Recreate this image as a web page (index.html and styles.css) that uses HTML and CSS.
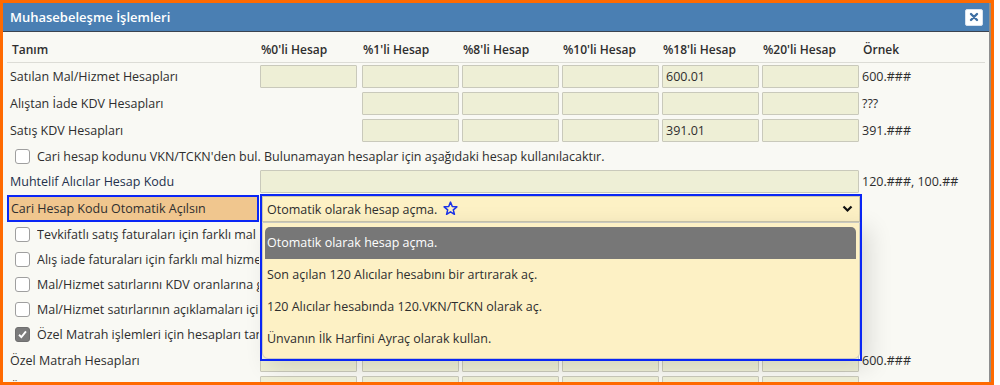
FILE: index.html
```html
<!DOCTYPE html>
<html lang="tr">
<head>
    <meta charset="UTF-8">
    <meta name="viewport" content="width=device-width, initial-scale=1.0">
    <title>Muhasebeleşme İşlemleri</title>
    <link rel="stylesheet" href="styles.css">
</head>
<body>

    <div class="dialog">
        <div class="window">
            <div class="titlebar">
                <span class="title">Muhasebeleşme İşlemleri</span>
                <button class="close" aria-label="Kapat">
                    <svg width="10" height="10" viewBox="0 0 10 10"><path d="M2 2 L8 8 M8 2 L2 8" stroke="#3f6fa3" stroke-width="2.4" stroke-linecap="round"/></svg>
                </button>
            </div>

            <div class="content">
                <div class="row head">
                    <div class="label">Tanım</div>
                    <div>%0'li Hesap</div>
                    <div>%1'li Hesap</div>
                    <div>%8'li Hesap</div>
                    <div>%10'li Hesap</div>
                    <div>%18'li Hesap</div>
                    <div>%20'li Hesap</div>
                    <div>Örnek</div>
                </div>

                <div class="row">
                    <div class="label">Satılan Mal/Hizmet Hesapları</div>
                    <div><input class="field" type="text"></div>
                    <div><input class="field" type="text"></div>
                    <div><input class="field" type="text"></div>
                    <div><input class="field" type="text"></div>
                    <div><input class="field" type="text" value="600.01"></div>
                    <div><input class="field" type="text"></div>
                    <div class="sample">600.###</div>
                </div>

                <div class="row">
                    <div class="label">Alıştan İade KDV Hesapları</div>
                    <div></div>
                    <div><input class="field" type="text"></div>
                    <div><input class="field" type="text"></div>
                    <div><input class="field" type="text"></div>
                    <div><input class="field" type="text"></div>
                    <div><input class="field" type="text"></div>
                    <div class="sample">???</div>
                </div>

                <div class="row">
                    <div class="label">Satış KDV Hesapları</div>
                    <div></div>
                    <div><input class="field" type="text"></div>
                    <div><input class="field" type="text"></div>
                    <div><input class="field" type="text"></div>
                    <div><input class="field" type="text" value="391.01"></div>
                    <div><input class="field" type="text"></div>
                    <div class="sample">391.###</div>
                </div>

                <label class="check">
                    <input type="checkbox">
                    <span>Cari hesap kodunu VKN/TCKN'den bul. Bulunamayan hesaplar için aşağıdaki hesap kullanılacaktır.</span>
                </label>

                <div class="row">
                    <div class="label navy">Muhtelif Alıcılar Hesap Kodu</div>
                    <div class="wide"><input class="field" type="text"></div>
                    <div class="sample">120.###, 100.##</div>
                </div>

                <div class="row">
                    <div class="label marked">Cari Hesap Kodu Otomatik Açılsın</div>
                    <div class="wide combo">
                        <div class="combo-value">
                            <span>Otomatik olarak hesap açma.</span>
                            <svg class="star" width="15" height="15" viewBox="0 0 16 16"><path d="M8 1.2 L9.9 5.8 L14.8 6.2 L11 9.4 L12.2 14.2 L8 11.6 L3.8 14.2 L5 9.4 L1.2 6.2 L6.1 5.8 Z" fill="none" stroke="#1b33e8" stroke-width="1.6" stroke-linejoin="round"/></svg>
                            <svg class="chevron" width="11" height="8" viewBox="0 0 11 8"><path d="M1.5 1.5 L5.5 5.5 L9.5 1.5" fill="none" stroke="#111" stroke-width="2.2"/></svg>
                        </div>
                        <div class="combo-list">
                            <ul class="options">
                                <li class="active">Otomatik olarak hesap açma.</li>
                                <li>Son açılan 120 Alıcılar hesabını bir artırarak aç.</li>
                                <li>120 Alıcılar hesabında 120.VKN/TCKN olarak aç.</li>
                                <li>Ünvanın İlk Harfini Ayraç olarak kullan.</li>
                            </ul>
                        </div>
                    </div>
                </div>

                <label class="check list-check">
                    <input type="checkbox">
                    <span>Tevkifatlı satış faturaları için farklı mal hizmet hesabı kullan.</span>
                </label>
                <label class="check list-check">
                    <input type="checkbox">
                    <span>Alış iade faturaları için farklı mal hizmet hesabı kullan.</span>
                </label>
                <label class="check list-check">
                    <input type="checkbox">
                    <span>Mal/Hizmet satırlarını KDV oranlarına göre grupla.</span>
                </label>
                <label class="check list-check">
                    <input type="checkbox">
                    <span>Mal/Hizmet satırlarının açıklamaları için ayrı satır oluştur.</span>
                </label>
                <label class="check list-check">
                    <input type="checkbox" checked>
                    <span>Özel Matrah işlemleri için hesapları tanımla.</span>
                </label>

                <div class="row">
                    <div class="label">Özel Matrah Hesapları</div>
                    <div><input class="field" type="text"></div>
                    <div><input class="field" type="text"></div>
                    <div><input class="field" type="text"></div>
                    <div><input class="field" type="text"></div>
                    <div><input class="field" type="text"></div>
                    <div><input class="field" type="text"></div>
                    <div class="sample">600.###</div>
                </div>

                <div class="row">
                    <div class="label">Özel Matrah KDV Hesapları</div>
                    <div><input class="field" type="text"></div>
                    <div><input class="field" type="text"></div>
                    <div><input class="field" type="text"></div>
                    <div><input class="field" type="text"></div>
                    <div><input class="field" type="text"></div>
                    <div><input class="field" type="text"></div>
                    <div class="sample">391.###</div>
                </div>
            </div>
        </div>
    </div>

</body>
</html>
```

FILE: styles.css
```css
* {
    margin: 0;
    padding: 0;
    box-sizing: border-box;
}

body {
    font-family: 'Open Sans', 'Noto Sans', sans-serif;
    font-size: 12.5px;
    color: #2e2e2e;
    background: #ffffff;
}

.dialog {
    width: 994px;
    height: 385px;
    border: 3px solid #ff6a00;
    overflow: hidden;
    background-color: #f9f9f4;
}

.window {
    height: 100%;
    border-right: 2px solid #8e8e8e;
}

.titlebar {
    height: 29px;
    display: flex;
    align-items: center;
    justify-content: space-between;
    padding: 0 6px 0 7px;
    background-color: #4a7fb3;
    border-bottom: 1px solid #3b4450;
}

.title {
    color: #ffffff;
    font-weight: 600;
    font-size: 13px;
}

.close {
    width: 18px;
    height: 17px;
    display: flex;
    align-items: center;
    justify-content: center;
    background-color: #ffffff;
    border: 1px solid #d8e2ee;
    border-radius: 2px;
}

.content {
    padding-left: 4px;
}

.row {
    display: grid;
    grid-template-columns: 253px 102px repeat(5, 100px) 1fr;
    align-items: center;
    height: 27px;
}

.row.head {
    height: 31px;
    padding-top: 5px;
    font-weight: 600;
    font-size: 12px;
    border-bottom: 1px solid #dcdcd6;
    margin-right: 4px;
}

.row.head > div {
    padding-left: 1px;
}

.row.head .label {
    padding-left: 5px;
}

.label {
    padding-left: 3px;
    white-space: nowrap;
}

.label.navy {
    color: #24314c;
}

.label.marked {
    height: 27px;
    width: 252px;
    display: flex;
    align-items: center;
    padding-left: 2px;
    background-color: #f0c68e;
    border: 2px solid #0a26f5;
}

.field {
    display: block;
    width: 97px;
    height: 23px;
    padding: 0 3px;
    font-family: inherit;
    font-size: 12.5px;
    color: #2e2e2e;
    background-color: #eeefd6;
    border: 1px solid #c9c9bb;
    border-radius: 1px;
}

.wide {
    grid-column: 2 / 8;
}

.wide .field {
    width: 599px;
}

.sample {
    white-space: nowrap;
}

.check {
    display: flex;
    align-items: center;
    height: 24px;
    padding-left: 8px;
    white-space: nowrap;
}

/* rows that sit under the open list end where the list begins */
.check.list-check {
    height: 25px;
    width: 252px;
}

.check.list-check span {
    min-width: 0;
    overflow: hidden;
}

.check input {
    appearance: none;
    width: 15px;
    height: 15px;
    margin-right: 7px;
    background-color: #ffffff;
    border: 1px solid #9f9f9f;
    border-radius: 3px;
    flex-shrink: 0;
}

.check input:checked {
    background-color: #7b7b7b;
    border-color: #6f6f6f;
    background-image: url("data:image/svg+xml,%3Csvg xmlns='http://www.w3.org/2000/svg' viewBox='0 0 15 15'%3E%3Cpath d='M3.5 7.8 L6.2 10.5 L11.5 4' fill='none' stroke='white' stroke-width='2.2'/%3E%3C/svg%3E");
}

/* select with open list */
.combo {
    position: relative;
    height: 28px;
    margin-top: -1px;
    border: 2px solid #0a26f5;
    border-bottom: none;
}

.combo-value {
    height: 26px;
    display: flex;
    align-items: center;
    padding-left: 4px;
    background-color: #fdf1c5;
    border: 1px solid #cbc6ad;
}

.star {
    margin-left: 6px;
    margin-top: -1px;
}

.chevron {
    margin-left: auto;
    margin-right: 6px;
}

.combo-list {
    position: absolute;
    top: 26px;
    left: -2px;
    right: -2px;
    z-index: 5;
    border: 2px solid #0a26f5;
    border-top: none;
    box-shadow: 8px 6px 22px rgba(0, 0, 0, 0.12);
}

.options {
    list-style: none;
    padding: 4px 3px 3px 2px;
    background-color: #fdf1c5;
    border: 1px solid #c9c9c0;
    border-radius: 0 0 6px 6px;
}

.options li {
    height: 32px;
    line-height: 32px;
    padding-left: 2px;
}

.options li.active {
    color: #ffffff;
    background-color: #777777;
    border-radius: 5px 5px 0 0;
}
```
